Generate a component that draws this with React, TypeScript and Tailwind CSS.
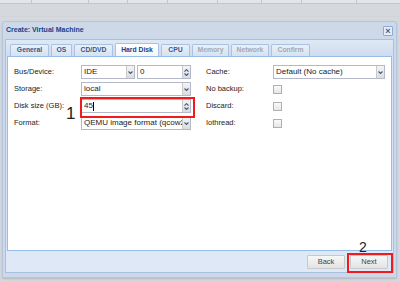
import React from "react";

const font = { fontFamily: '"Liberation Sans", Arial, sans-serif' };

function Chevron({ up = false }: { up?: boolean }) {
  return (
    <svg width="5" height="3" viewBox="0 0 5 3">
      <path d={up ? "M0.5 2.6 L2.5 0.6 L4.5 2.6" : "M0.5 0.5 L2.5 2.5 L4.5 0.5"} fill="none" stroke="#3f5f8f" strokeWidth="1.1" />
    </svg>
  );
}

function Trigger() {
  return (
    <div className="w-[8px] h-full flex items-center justify-center bg-gradient-to-b from-[#f4f4f4] to-[#dcdcdc] border-l border-[#c9c9c9]">
      <Chevron />
    </div>
  );
}

function Spinner() {
  return (
    <div className="w-[8px] h-full flex flex-col items-center justify-center gap-[1px] bg-gradient-to-b from-[#f4f4f4] to-[#dcdcdc] border-l border-[#c9c9c9]">
      <Chevron up />
      <Chevron />
    </div>
  );
}

function Field({ w, text, kind, cursor = false }: { w: string; text: string; kind: "combo" | "spin" | "none"; cursor?: boolean }) {
  return (
    <div className={`${w} h-[14px] flex bg-white border border-[#b5b8c8] overflow-hidden`}>
      <div className="flex-1 min-w-0 flex items-center pl-[2px] text-[8px] text-[#222] whitespace-nowrap overflow-hidden">
        {text}
        {cursor && <span className="w-[1px] h-[9px] bg-black ml-[0.5px]" />}
      </div>
      {kind === "combo" && <Trigger />}
      {kind === "spin" && <Spinner />}
    </div>
  );
}

function Check() {
  return <div className="w-[9px] h-[9px] border border-[#b0b0b0] bg-gradient-to-b from-[#fafafa] to-[#e6e6e6]" />;
}

function Label({ children }: { children: React.ReactNode }) {
  return <div className="text-[7.5px] text-[#222] leading-none">{children}</div>;
}

const tabs: { name: string; w: string; active?: boolean; disabled?: boolean }[] = [
  { name: "General", w: "w-[39px]" },
  { name: "OS", w: "w-[21px]" },
  { name: "CD/DVD", w: "w-[39px]" },
  { name: "Hard Disk", w: "w-[44px]", active: true },
  { name: "CPU", w: "w-[29px]" },
  { name: "Memory", w: "w-[37px]", disabled: true },
  { name: "Network", w: "w-[38px]", disabled: true },
  { name: "Confirm", w: "w-[39px]", disabled: true },
];

export default function App() {
  return (
    <div className="relative w-[400px] h-[281px] overflow-hidden bg-[#d5d8dd]" style={font}>
      {/* top strip */}
      <div className="h-[4px] flex bg-[#e3e5e8] border-b border-[#c3c7cd]">
        <div className="w-[32px] border-r border-[#c3c7cd]" />
        <div className="w-[57px] border-r border-[#c3c7cd]" />
        <div className="w-[39px] border-r border-[#c3c7cd]" />
        <div className="w-[40px] border-r border-[#c3c7cd]" />
        <div className="w-[50px] border-r border-[#c3c7cd]" />
        <div className="w-[44px] border-r border-[#c3c7cd]" />
        <div className="w-[40px] border-r border-[#c3c7cd]" />
        <div className="w-[55px] border-r border-[#c3c7cd]" />
        <div className="flex-1" />
      </div>
      <div className="h-[13px] border-b border-[#d0d3d8]" />

      {/* window */}
      <div className="ml-[2px] mt-[4px] w-[395px] h-[257px] flex flex-col rounded-t-[3px] bg-[#cdd9e8] border border-[#b3c6df] shadow-[0_1px_2px_rgba(0,0,0,0.15)]">
        {/* header */}
        <div className="h-[17px] flex items-center justify-between pl-[3px] pr-[3px]">
          <div className="text-[7px] font-bold text-[#15428b]">Create: Virtual Machine</div>
          <div className="w-[10px] h-[10px] mt-[1px] flex items-center justify-center border border-[#8fa9cf] bg-[#e6edf7] rounded-[1px] text-[#3a5d94] text-[9px] leading-none font-bold">×</div>
        </div>

        {/* tab panel */}
        <div className="mx-[2px] flex-1 flex flex-col border border-[#a7bfe0] bg-[#d9e5f4]">
          {/* tab strip */}
          <div className="h-[16px] flex items-end gap-[2px] pl-[4px] bg-gradient-to-b from-[#dfe9f6] to-[#cfdcee]">
            {tabs.map((t) => (
              <div
                key={t.name}
                className={`${t.w} ${t.active ? "h-[13px] bg-gradient-to-b from-[#ffffff] to-[#f2f6fb] text-[#15428b]" : "h-[12px] bg-gradient-to-b from-[#eaf0f8] to-[#d6e2f1]"} ${t.disabled ? "text-[#a3a9b1]" : t.active ? "" : "text-[#37588c]"} flex items-center justify-center rounded-t-[2px] border border-b-0 border-[#a9c1e2] text-[6.8px] font-bold whitespace-nowrap`}
              >
                {t.name}
              </div>
            ))}
          </div>

          {/* body */}
          <div className="mx-[1px] h-[195px] bg-white border border-[#99bbe8] flex gap-[15px] pt-[8px] pl-[6px]">
            {/* left column */}
            <div className="flex flex-col gap-[3px]">
              <div className="flex items-center h-[14px]">
                <div className="w-[67px]"><Label>Bus/Device:</Label></div>
                <div className="flex gap-[2px]">
                  <Field w="w-[54px]" text="IDE" kind="combo" />
                  <Field w="w-[54px]" text="0" kind="spin" />
                </div>
              </div>
              <div className="flex items-center h-[14px]">
                <div className="w-[67px]"><Label>Storage:</Label></div>
                <Field w="w-[110px]" text="local" kind="combo" />
              </div>
              <div className="flex items-center h-[14px]">
                <div className="w-[67px]"><Label>Disk size (GB):</Label></div>
                <Field w="w-[110px]" text="45" kind="spin" cursor />
              </div>
              <div className="flex items-center h-[14px]">
                <div className="w-[67px]"><Label>Format:</Label></div>
                <Field w="w-[110px]" text="QEMU image format (qcow2)" kind="combo" />
              </div>
            </div>

            {/* right column */}
            <div className="flex flex-col gap-[3px]">
              <div className="flex items-center h-[14px]">
                <div className="w-[67px]"><Label>Cache:</Label></div>
                <Field w="w-[112px]" text="Default (No cache)" kind="combo" />
              </div>
              <div className="flex items-center h-[14px]">
                <div className="w-[67px]"><Label>No backup:</Label></div>
                <Check />
              </div>
              <div className="flex items-center h-[14px]">
                <div className="w-[67px]"><Label>Discard:</Label></div>
                <Check />
              </div>
              <div className="flex items-center h-[14px]">
                <div className="w-[67px]"><Label>Iothread:</Label></div>
                <Check />
              </div>
            </div>
          </div>

          {/* bottom toolbar */}
          <div className="flex-1 flex items-center justify-end gap-[5px] pr-[5px] bg-[#dfe8f6]">
            <div className="w-[38px] h-[14px] flex items-center justify-center border border-[#c9c9c9] rounded-[1px] bg-gradient-to-b from-[#f7f7f7] to-[#e3e3e3] text-[7.5px] text-[#444]">Back</div>
            <div className="w-[38px] h-[14px] flex items-center justify-center border border-[#c9c9c9] rounded-[1px] bg-gradient-to-b from-[#f7f7f7] to-[#e3e3e3] text-[7.5px] text-[#444]">Next</div>
          </div>
        </div>
        <div className="h-[4px]" />
      </div>

      {/* annotations */}
      <div className="absolute left-[80px] top-[97px] w-[115px] h-[21px] border-[2.5px] border-[#ee1c1c]" />
      <div className="absolute left-[66px] top-[105px] text-[17px] leading-none text-[#222]">1</div>
      <div className="absolute left-[347px] top-[253px] w-[46px] h-[20px] border-[2.5px] border-[#ee1c1c]" />
      <div className="absolute left-[359px] top-[240px] text-[14px] leading-none text-[#222]">2</div>
    </div>
  );
}
